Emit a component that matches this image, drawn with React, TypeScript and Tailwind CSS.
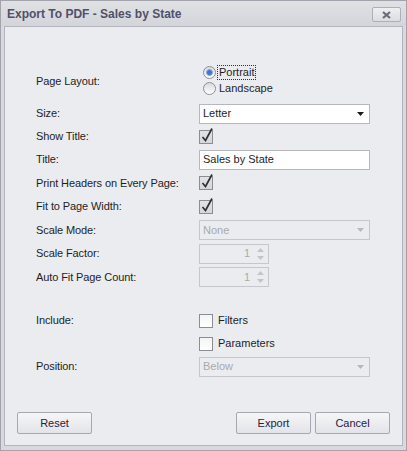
import React from 'react';

const font = { fontFamily: '"Liberation Sans", Arial, sans-serif' };

const Label = ({ children }: { children: React.ReactNode }) => (
  <div className="w-[163px] shrink-0 text-[11px] tracking-[-0.1px] text-[#1e1e1e]">{children}</div>
);

const Row = ({ h, label, children }: { h: string; label: string; children?: React.ReactNode }) => (
  <div className={`flex items-center ${h}`}>
    <Label>{label}</Label>
    <div className="flex flex-1 items-center">{children}</div>
  </div>
);

const Check = ({ checked = false, text }: { checked?: boolean; text?: string }) => (
  <div className="flex items-center gap-[5px]">
    <div
      className={`relative w-[14px] h-[14px] border border-[#8c8d94] ${
        checked ? 'bg-gradient-to-b from-[#e2e3e7] to-[#d6d7dc]' : 'bg-gradient-to-b from-[#f4f4f6] to-[#ffffff]'
      }`}
    >
      {checked && (
        <svg width="14" height="16" viewBox="0 0 14 16" className="absolute left-[0px] top-[-4px]">
          <path d="M2.5 10 L5.5 13.5 L12 1.5" fill="none" stroke="#303034" strokeWidth="1.7" />
        </svg>
      )}
    </div>
    {text && <span className="text-[11px] text-[#1e1e1e]">{text}</span>}
  </div>
);

const Radio = ({ selected = false, text, focus = false }: { selected?: boolean; text: string; focus?: boolean }) => (
  <div className="flex items-center gap-[2px] h-[16px]">
    <div className="flex items-center justify-center w-[13px] h-[13px] rounded-full border border-[#8f9096] bg-gradient-to-b from-[#d8d9de] to-[#ffffff]">
      {selected && (
        <div className="w-[7px] h-[7px] rounded-full bg-[#3f74cf] border border-[#86a9e4]" />
      )}
    </div>
    <span
      className={`text-[11px] leading-[13px] text-[#1e1e1e] px-[1px] ${
        focus ? 'outline outline-1 outline-dotted outline-[#333]' : ''
      }`}
    >
      {text}
    </span>
  </div>
);

const Arrow = ({ color }: { color: string }) => (
  <svg width="7" height="4" viewBox="0 0 7 4">
    <path d="M0 0 H7 L3.5 4 Z" fill={color} />
  </svg>
);

const Combo = ({ value, disabled = false }: { value: string; disabled?: boolean }) => (
  <div
    className={`flex items-center justify-between w-[171px] h-[20px] pl-[3px] pr-[5px] border ${
      disabled ? 'border-[#c6c7cc] bg-[#ebecf0] text-[#a9a9ad]' : 'border-[#b7b8be] bg-white text-[#1e1e1e]'
    } text-[11px]`}
  >
    <span>{value}</span>
    <Arrow color={disabled ? '#b8b8bc' : '#1a1a1a'} />
  </div>
);

const Spin = () => (
  <div className="flex items-center justify-end w-[70px] h-[20px] border border-[#c6c7cc] bg-[#ebecf0] text-[11px] text-[#a9a9ad] pr-[4px]">
    <span className="mr-[7px]">1</span>
    <div className="flex flex-col gap-[4px]">
      <svg width="7" height="4" viewBox="0 0 7 4">
        <path d="M0 4 H7 L3.5 0 Z" fill="#c4c4c8" />
      </svg>
      <svg width="7" height="4" viewBox="0 0 7 4">
        <path d="M0 0 H7 L3.5 4 Z" fill="#c4c4c8" />
      </svg>
    </div>
  </div>
);

const Button = ({ children }: { children: React.ReactNode }) => (
  <div className="flex items-center justify-center w-[75px] h-[22px] rounded-[2px] border border-[#a7a8af] bg-gradient-to-b from-[#f6f6f8] to-[#e3e4e8] text-[11px] text-[#22243f]">
    {children}
  </div>
);

export default function App() {
  return (
    <div style={font} className="w-[407px] h-[451px] bg-[#d8d9de] border border-[#a3a4ab] flex flex-col">
      {/* title bar */}
      <div className="flex items-center justify-between h-[25px] pl-[6px] pr-[5px] bg-gradient-to-b from-[#e0e1e5] to-[#d4d5da]">
        <span className="text-[12px] font-bold text-[#50506a]">Export To PDF - Sales by State</span>
        <div className="flex items-center justify-center w-[29px] h-[15px] mt-[2px] rounded-[2px] border border-[#aeafb6] bg-gradient-to-b from-[#eeeff2] to-[#dcdde1]">
          <svg width="9" height="8" viewBox="0 0 9 8">
            <path d="M1 1 L8 7 M8 1 L1 7" stroke="#6a6b78" strokeWidth="2.2" />
          </svg>
        </div>
      </div>

      {/* content */}
      <div className="flex-1 mx-[3px] mb-[4px] border border-[#b4b5bc] bg-[#ebecf0] flex flex-col pl-[31px] pr-[32px]">
        <div className="flex items-center mt-[37px] mb-[4px] h-[34px]">
          <Label>Page Layout:</Label>
          <div className="flex flex-col pl-[4px] -mt-[2px]">
            <Radio selected focus text="Portrait" />
            <Radio text="Landscape" />
          </div>
        </div>
        <Row h="h-[23px]" label="Size:">
          <Combo value="Letter" />
        </Row>
        <Row h="h-[23px]" label="Show Title:">
          <Check checked />
        </Row>
        <Row h="h-[23px]" label="Title:">
          <div className="flex items-center w-[171px] h-[20px] pl-[3px] border border-[#b7b8be] bg-white text-[11px] text-[#1e1e1e]">
            Sales by State
          </div>
        </Row>
        <Row h="h-[24px]" label="Print Headers on Every Page:">
          <Check checked />
        </Row>
        <Row h="h-[23px]" label="Fit to Page Width:">
          <Check checked />
        </Row>
        <Row h="h-[24px]" label="Scale Mode:">
          <Combo value="None" disabled />
        </Row>
        <Row h="h-[23px]" label="Scale Factor:">
          <Spin />
        </Row>
        <Row h="h-[24px]" label="Auto Fit Page Count:">
          <Spin />
        </Row>

        <Row h="h-[23px] mt-[20px]" label="Include:">
          <Check text="Filters" />
        </Row>
        <Row h="h-[23px]" label="">
          <Check text="Parameters" />
        </Row>
        <Row h="h-[23px]" label="Position:">
          <Combo value="Below" disabled />
        </Row>

        <div className="flex items-center justify-between mt-[34px] -ml-[19px] -mr-[20px]">
          <Button>Reset</Button>
          <div className="flex gap-[4px]">
            <Button>Export</Button>
            <Button>Cancel</Button>
          </div>
        </div>
      </div>
    </div>
  );
}
